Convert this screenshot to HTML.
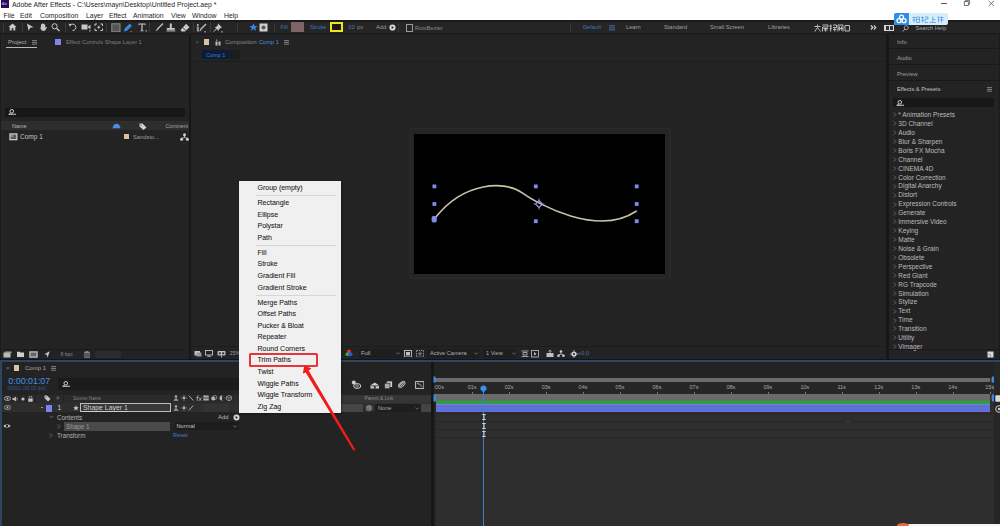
<!DOCTYPE html><html><head><meta charset="utf-8"><style>
html,body{margin:0;padding:0;width:1000px;height:526px;overflow:hidden;background:#171717}
body>div,body>svg{position:absolute}
.t{position:absolute;white-space:nowrap;font-family:"Liberation Sans",sans-serif}
</style></head><body>
<div style="left:0px;top:0px;width:1000px;height:526px;background:#171717;"></div>
<div style="left:0px;top:0px;width:1000px;height:20px;background:#ffffff;"></div>
<div style="left:0.5px;top:0px;width:8.5px;height:7.5px;background:#2b0c52;"></div>
<div class="t" style="left:1.7px;top:1.21px;font-size:4.3px;line-height:5.16px;color:#a98cff;font-weight:bold">Ae</div>
<div class="t" style="left:12px;top:0.70px;font-size:6.9px;line-height:8.28px;color:#262626;">Adobe After Effects - C:\Users\mayn\Desktop\Untitled Project.aep *</div>
<div class="t" style="left:3.5px;top:11.70px;font-size:6.9px;line-height:8.28px;color:#262626;">File</div>
<div class="t" style="left:20px;top:11.70px;font-size:6.9px;line-height:8.28px;color:#262626;">Edit</div>
<div class="t" style="left:40px;top:11.70px;font-size:6.9px;line-height:8.28px;color:#262626;">Composition</div>
<div class="t" style="left:86px;top:11.70px;font-size:6.9px;line-height:8.28px;color:#262626;">Layer</div>
<div class="t" style="left:109px;top:11.70px;font-size:6.9px;line-height:8.28px;color:#262626;">Effect</div>
<div class="t" style="left:133px;top:11.70px;font-size:6.9px;line-height:8.28px;color:#262626;">Animation</div>
<div class="t" style="left:171px;top:11.70px;font-size:6.9px;line-height:8.28px;color:#262626;">View</div>
<div class="t" style="left:192px;top:11.70px;font-size:6.9px;line-height:8.28px;color:#262626;">Window</div>
<div class="t" style="left:224px;top:11.70px;font-size:6.9px;line-height:8.28px;color:#262626;">Help</div>
<div style="left:941px;top:3.2px;width:6px;height:0.7px;background:#555;"></div>
<svg style="position:absolute;left:963px;top:0px;" width="8" height="7" viewBox="0 0 8 7"><rect x="1.3" y="1.6" width="4" height="3.8" fill="none" stroke="#555" stroke-width="0.8"/><path d="M2.6 1.6V0.4H6.6V4.2H5.3" fill="none" stroke="#555" stroke-width="0.8"/></svg>
<svg style="position:absolute;left:987px;top:0px;" width="10" height="8" viewBox="0 0 10 8"><path d="M1.6 0.8L7 6.2M7 0.8L1.6 6.2" stroke="#555" stroke-width="0.8"/></svg>
<div style="left:0px;top:20px;width:1000px;height:13px;background:#252525;"></div>
<div style="left:0px;top:20px;width:1000px;height:1.8px;background:#1b1b1b;"></div>
<div style="left:0px;top:32.8px;width:1000px;height:2.2px;background:#1c1c1c;"></div>
<div style="left:3.4px;top:22.5px;width:0.6px;height:9px;background:#3a3a3a;"></div>
<div style="left:21.8px;top:22.5px;width:0.6px;height:9px;background:#3a3a3a;"></div>
<div style="left:64.5px;top:22.5px;width:0.6px;height:9px;background:#3a3a3a;"></div>
<div style="left:106.4px;top:22.5px;width:0.6px;height:9px;background:#3a3a3a;"></div>
<div style="left:149px;top:22.5px;width:0.6px;height:9px;background:#3a3a3a;"></div>
<div style="left:192.5px;top:22.5px;width:0.6px;height:9px;background:#3a3a3a;"></div>
<div style="left:209.5px;top:22.5px;width:0.6px;height:9px;background:#3a3a3a;"></div>
<div style="left:237px;top:22.5px;width:0.6px;height:9px;background:#3a3a3a;"></div>
<div style="left:274px;top:22.5px;width:0.6px;height:9px;background:#3a3a3a;"></div>
<div style="left:398px;top:22.5px;width:0.6px;height:9px;background:#3a3a3a;"></div>
<div style="left:570px;top:22.5px;width:0.6px;height:9px;background:#3a3a3a;"></div>
<svg style="position:absolute;left:8px;top:23px;" width="9" height="8" viewBox="0 0 9 8"><path d="M0.5 4L4.5 0.5L8.5 4H7.3V7.5H5.3V5.2H3.7V7.5H1.7V4Z" fill="#c8c8c8"/></svg>
<svg style="position:absolute;left:26px;top:23px;" width="8" height="8" viewBox="0 0 8 8"><path d="M1 0.5L7.5 4.3L4.3 4.8L2.5 7.8Z" fill="#c8c8c8"/></svg>
<svg style="position:absolute;left:38.5px;top:23px;" width="9" height="8" viewBox="0 0 9 8"><path d="M2 3.5V1.2h1V3.2V0.6h1.1v2.6V0.8h1.1v2.6V1.5h1v3.2l1-1 .8.5L6 7.8H3L1.3 5.2Z" fill="#c8c8c8"/></svg>
<svg style="position:absolute;left:51px;top:23px;" width="9" height="8.5" viewBox="0 0 9 8.5"><circle cx="3.6" cy="3.3" r="2.6" fill="none" stroke="#c8c8c8" stroke-width="1"/><path d="M5.5 5.3L8.5 8" stroke="#c8c8c8" stroke-width="1.3"/></svg>
<svg style="position:absolute;left:68px;top:23px;" width="9" height="8" viewBox="0 0 9 8"><path d="M2 2.5A3.2 3.2 0 1 1 4.5 7.5" fill="none" stroke="#c8c8c8" stroke-width="1"/><path d="M0.5 0.8L3.5 1L2 3.8Z" fill="#c8c8c8"/></svg>
<svg style="position:absolute;left:80.5px;top:23px;" width="10" height="8.5" viewBox="0 0 10 8.5"><rect x="0.5" y="1.5" width="6" height="5" fill="#c8c8c8"/><path d="M6.5 4L9.5 1.8V6.2Z" fill="#c8c8c8"/><rect x="8" y="7.3" width="1.5" height="1" fill="#c8c8c8"/></svg>
<svg style="position:absolute;left:94px;top:23px;" width="9.5" height="8.5" viewBox="0 0 9.5 8.5"><path d="M1 1h2M1 1v2M8.5 1h-2M8.5 1v2M1 7.5h2M1 7.5v-2M8.5 7.5h-2M8.5 7.5v-2" stroke="#c8c8c8" stroke-width="1"/><path d="M4.75 2.8V5.7M3.3 4.25H6.2" stroke="#c8c8c8" stroke-width="1"/></svg>
<svg style="position:absolute;left:110.5px;top:22.5px;" width="10" height="9.5" viewBox="0 0 10 9.5"><rect x="0.8" y="0.8" width="8.2" height="8" fill="#555" stroke="#8a8a8a" stroke-width="1"/></svg>
<svg style="position:absolute;left:123px;top:22.5px;" width="10" height="9.5" viewBox="0 0 10 9.5"><path d="M1 7.5L2 5L6.8 0.8L9 2.8L4.5 7.3L1.8 8.5Z" fill="#3d86e6"/><rect x="7.5" y="8" width="1.5" height="1.2" fill="#c06020"/></svg>
<svg style="position:absolute;left:137.5px;top:23px;" width="9" height="9" viewBox="0 0 9 9"><path d="M0.5 0.5H7.5V2.3H6.8V1.4H4.6V7.5H5.5V8.2H2.5V7.5H3.4V1.4H1.2V2.3H0.5Z" fill="#c8c8c8"/><rect x="7.5" y="7.3" width="1.2" height="1.2" fill="#c8c8c8"/></svg>
<svg style="position:absolute;left:153.5px;top:23px;" width="10" height="9" viewBox="0 0 10 9"><path d="M9 0.5L3.5 6" stroke="#c8c8c8" stroke-width="1.2"/><path d="M3.5 5.5L1 8.3L2.6 7.6L4.5 6.6Z" fill="#c8c8c8"/></svg>
<svg style="position:absolute;left:166px;top:23px;" width="10" height="9" viewBox="0 0 10 9"><rect x="3.8" y="0.5" width="2" height="4.5" fill="#c8c8c8"/><rect x="0.8" y="5" width="8" height="1.8" fill="#c8c8c8"/><rect x="0.5" y="7.4" width="8.8" height="1" fill="#c8c8c8"/></svg>
<svg style="position:absolute;left:179.5px;top:23px;" width="10" height="9" viewBox="0 0 10 9"><path d="M6 0.8L9.5 4.2L5 8.5L1.5 8.5L0.5 7L5.5 1.5Z" fill="#c8c8c8"/><path d="M2.5 4.3L5.8 7.6" stroke="#262626" stroke-width="0.8"/></svg>
<svg style="position:absolute;left:196px;top:22.5px;" width="11" height="10" viewBox="0 0 11 10"><circle cx="1.8" cy="2" r="0.9" fill="#c8c8c8"/><path d="M1.3 3.5V8.5M2.3 3.5V8.5" stroke="#c8c8c8" stroke-width="0.8"/><path d="M10 1L4.5 6.5" stroke="#c8c8c8" stroke-width="1.2"/><path d="M4.5 6L3 8.5L5.5 7.2Z" fill="#c8c8c8"/><rect x="8.5" y="8.2" width="1.3" height="1.2" fill="#c8c8c8"/></svg>
<svg style="position:absolute;left:212.5px;top:22.5px;" width="10" height="10" viewBox="0 0 10 10"><path d="M5 0.5L9 4.5L7.5 5L5.5 7L5.8 8.3L1.5 4L2.8 4.3L4.8 2.3Z" fill="#c8c8c8"/><path d="M3.2 6L0.8 8.6" stroke="#c8c8c8" stroke-width="1"/><rect x="8.3" y="8.3" width="1.3" height="1.2" fill="#c8c8c8"/></svg>
<svg style="position:absolute;left:249px;top:23px;" width="9" height="8.5" viewBox="0 0 9 8.5"><path d="M4.5 0.3L5.6 3H8.6L6.2 4.9L7.2 8L4.5 6.1L1.8 8L2.8 4.9L0.4 3H3.4Z" fill="#3d86e6"/></svg>
<svg style="position:absolute;left:259px;top:23px;" width="9" height="9" viewBox="0 0 9 9"><rect x="0.5" y="0.5" width="8" height="8" fill="#cfcfcf"/><circle cx="4.5" cy="4.5" r="2" fill="#555"/></svg>
<div class="t" style="left:280.5px;top:24.49px;font-size:5.7px;line-height:6.84px;color:#3f78c0;">Fill</div>
<div style="left:291px;top:22.2px;width:13px;height:9.6px;background:#7d6467;"></div>
<div class="t" style="left:310px;top:24.49px;font-size:5.7px;line-height:6.84px;color:#3f78c0;">Stroke</div>
<div style="left:329.8px;top:22.3px;width:13px;height:9.7px;background:#1a1a1a;border:2.3px solid #f0e41a;box-sizing:border-box"></div>
<div class="t" style="left:348.3px;top:24.38px;font-size:5.9px;line-height:7.08px;color:#3f78c0;">10</div>
<div class="t" style="left:357px;top:24.38px;font-size:5.9px;line-height:7.08px;color:#888;">px</div>
<div class="t" style="left:376px;top:24.49px;font-size:5.7px;line-height:6.84px;color:#9a9a9a;">Add:</div>
<svg style="position:absolute;left:389px;top:24px;" width="7" height="7" viewBox="0 0 7 7"><circle cx="3.5" cy="3.5" r="3.1" fill="#d8d8d8"/><path d="M2.6 1.9L5 3.5L2.6 5.1Z" fill="#262626"/></svg>
<div style="left:405.5px;top:24px;width:7.5px;height:7.5px;background:transparent;border:1px solid #9a9a9a;box-sizing:border-box"></div>
<div class="t" style="left:415px;top:24.55px;font-size:5.6px;line-height:6.72px;color:#8a8a8a;">RotoBezier</div>
<div class="t" style="left:583px;top:24.49px;font-size:5.7px;line-height:6.84px;color:#3f78c0;">Default</div>
<svg style="position:absolute;left:608.5px;top:24.5px;" width="6" height="6" viewBox="0 0 6 6"><path d="M0 0.8H6M0 2.8H6M0 4.8H6" stroke="#3f78c0" stroke-width="0.9"/></svg>
<div class="t" style="left:626px;top:24.49px;font-size:5.7px;line-height:6.84px;color:#a0a0a0;">Learn</div>
<div class="t" style="left:664px;top:24.49px;font-size:5.7px;line-height:6.84px;color:#a0a0a0;">Standard</div>
<div class="t" style="left:710px;top:24.49px;font-size:5.7px;line-height:6.84px;color:#a0a0a0;">Small Screen</div>
<div class="t" style="left:768px;top:24.49px;font-size:5.7px;line-height:6.84px;color:#a0a0a0;">Libraries</div>
<svg style="position:absolute;left:814px;top:23.5px;" width="36" height="8" viewBox="0 0 36 8"><g stroke="#bcbcbc" stroke-width="1" fill="none"><path d="M0.5 2.5H6.5M3.5 0.5V3.5L0.8 7.5M3.5 3.5L6.5 7.5"/><path d="M8.5 1H14V3H8.5V7.5M9.5 4.5H14M10 6H13.5M11.5 4V7.5"/><path d="M15.5 2H18M16.7 0.5V7.5M15.5 5L18 4M19 1H22.5V3.5H19M20.8 3.5V7.5M19 5.5H22.5"/><path d="M24 1V7.5M24 1H29V7.5M25.5 2.5V6.5M27.5 2.5V6.5M24 4.5H29"/><path d="M31 1.5H35.5V7H31Z"/></g></svg>
<svg style="position:absolute;left:869.5px;top:24.8px;" width="7" height="5" viewBox="0 0 7 5"><path d="M0.8 0.5L2.8 2.5L0.8 4.5M3.8 0.5L5.8 2.5L3.8 4.5" stroke="#dcdcdc" stroke-width="1.1" fill="none"/></svg>
<div style="left:884px;top:25px;width:10px;height:6px;background:#d8d8d8;"></div>
<div style="left:885.5px;top:26.2px;width:3px;height:3.5px;background:#333;"></div>
<div style="left:889.5px;top:26.2px;width:3px;height:3.5px;background:#333;"></div>
<svg style="position:absolute;left:901.5px;top:24.5px;" width="7" height="7" viewBox="0 0 7 7"><circle cx="4.3" cy="2.7" r="2" fill="none" stroke="#bbb" stroke-width="0.8"/><path d="M3 4L0.7 6.5" stroke="#bbb" stroke-width="0.9"/></svg>
<div class="t" style="left:915.5px;top:24.55px;font-size:5.6px;line-height:6.72px;color:#a4a4a4;">Search Help</div>
<div style="left:894px;top:12.5px;width:54px;height:12.5px;background:#d6eefc;border-radius:2px"></div>
<div style="left:894px;top:12.5px;width:14.5px;height:12.5px;background:#2f8de4;border-radius:2px 0 0 2px"></div>
<svg style="position:absolute;left:896px;top:13.5px;" width="11" height="10" viewBox="0 0 11 10"><g fill="none" stroke="#fff" stroke-width="1.3"><circle cx="5.5" cy="3.2" r="2"/><circle cx="3" cy="6.7" r="2"/><circle cx="8" cy="6.7" r="2"/></g></svg>
<svg style="position:absolute;left:912px;top:15.5px;" width="32" height="7" viewBox="0 0 32 7"><g stroke="#5b9be0" stroke-width="0.8" fill="none"><path d="M0.5 1.5H3.5M2 0.5V6.5M0.5 4H3.5M4.5 1H7.5V6.5H4.5ZM4.5 3.5H7.5"/><path d="M9 1.5H12M10.5 0.5V6.5M9 5L12 4M13 1H16V3H13V6.5H16"/><path d="M17.5 6.5H24M20.8 0.5V6.5M20.8 3.5H23.5"/><path d="M25.5 1.5L26.5 0.5V6.5M27.5 1.5H31.5M29.5 0.5V6.5M27.5 4H31.5"/></g></svg>
<div style="left:0px;top:35px;width:189px;height:323.5px;background:#232323;"></div>
<div style="left:0px;top:35px;width:1.4px;height:323.5px;background:#1c1c1c;"></div>
<div style="left:1.4px;top:35px;width:3px;height:323.5px;background:#252525;"></div>
<div class="t" style="left:8px;top:38.78px;font-size:5.9px;line-height:7.08px;color:#b0b0b0;">Project</div>
<svg style="position:absolute;left:31.5px;top:39.8px;" width="5" height="5" viewBox="0 0 5 5"><path d="M0 0.6H5M0 2.4H5M0 4.2H5" stroke="#9a9a9a" stroke-width="0.8"/></svg>
<div style="left:6px;top:46.5px;width:31px;height:1px;background:#b8b8b8;"></div>
<div style="left:55px;top:39px;width:5.5px;height:6px;background:#8084f2;"></div>
<div class="t" style="left:66px;top:38.89px;font-size:5.7px;line-height:6.84px;color:#7e7e7e;">Effect Controls Shape Layer 1</div>
<div style="left:5px;top:107.5px;width:180px;height:9.5px;background:#171717;"></div>
<svg style="position:absolute;left:8px;top:109px;" width="9" height="7" viewBox="0 0 9 7"><circle cx="3.8" cy="2.3" r="1.8" fill="none" stroke="#d4d4d4" stroke-width="1"/><path d="M0.6 5.3H6.2M2.6 3.8L1.2 5.3" stroke="#d4d4d4" stroke-width="1"/><path d="M5.8 4.8H8.4L7.1 6.3Z" fill="#d4d4d4"/></svg>
<div style="left:1.4px;top:121.4px;width:187.6px;height:8.6px;background:#2e2e2e;"></div>
<div class="t" style="left:12px;top:122.67px;font-size:5.4px;line-height:6.48px;color:#b4b4b4;">Name</div>
<svg style="position:absolute;left:111.5px;top:123px;" width="9" height="6" viewBox="0 0 9 6"><path d="M0.5 5.2Q1.5 0.8 4.5 0.8Q7.5 0.8 8.5 5.2Z" fill="#4a8fe0"/></svg>
<svg style="position:absolute;left:139px;top:122.5px;" width="8" height="7" viewBox="0 0 8 7"><path d="M0.5 0.5H3.5L7.5 4.5L4.5 7L0.5 3.5Z" fill="#d0d0d0"/><circle cx="2" cy="2" r="0.6" fill="#2e2e2e"/></svg>
<div class="t" style="left:165.5px;top:122.78px;font-size:5.2px;line-height:6.24px;color:#a8a8a8;">Comment</div>
<svg style="position:absolute;left:9px;top:133px;" width="9" height="7.5" viewBox="0 0 9 7.5"><rect x="0.3" y="0.3" width="8.2" height="7" fill="#c8c8c8"/><rect x="1.6" y="1.6" width="5.6" height="4.4" fill="#5a5a5a"/><rect x="2.2" y="2.2" width="2" height="1.5" fill="#aaa"/></svg>
<div class="t" style="left:20px;top:133.23px;font-size:6.5px;line-height:7.80px;color:#c4c4c4;">Comp 1</div>
<div style="left:124px;top:134px;width:4.5px;height:5px;background:#d8c29c;"></div>
<div class="t" style="left:133px;top:134.04px;font-size:5.8px;line-height:6.96px;color:#9c9c9c;">Sandsto...</div>
<svg style="position:absolute;left:180px;top:133px;" width="9" height="8" viewBox="0 0 9 8"><circle cx="4.5" cy="1.7" r="1.5" fill="#d0d0d0"/><circle cx="1.6" cy="6.3" r="1.5" fill="#d0d0d0"/><circle cx="7.4" cy="6.3" r="1.5" fill="#d0d0d0"/><path d="M4.5 2.5V4.5M1.6 5.5L4.5 4.2L7.4 5.5" stroke="#d0d0d0" stroke-width="0.8" fill="none"/></svg>
<div style="left:0px;top:348.8px;width:189px;height:0.8px;background:#1c1c1c;"></div>
<svg style="position:absolute;left:3px;top:351px;" width="9" height="7" viewBox="0 0 9 7"><rect x="0.5" y="1.5" width="7" height="5" fill="#bcbcbc"/><rect x="2" y="0.5" width="6.5" height="1.8" fill="#9a9a9a"/></svg>
<svg style="position:absolute;left:17px;top:351px;" width="7" height="6" viewBox="0 0 7 6"><path d="M0 0.8H2.8L3.5 1.6H7V6H0Z" fill="#d0d0d0"/></svg>
<svg style="position:absolute;left:29px;top:350.5px;" width="9" height="7" viewBox="0 0 9 7"><rect x="0.3" y="0.3" width="8.4" height="6.4" fill="#c8c8c8"/><rect x="1.5" y="1.5" width="6" height="4" fill="#666"/></svg>
<svg style="position:absolute;left:44px;top:350.5px;" width="6" height="7" viewBox="0 0 6 7"><path d="M5.8 0.3L0.3 3.3L2.8 3.8L3.5 6.7Z" fill="#c8c8c8"/></svg>
<div class="t" style="left:60.5px;top:351.30px;font-size:5px;line-height:6.00px;color:#8a8a8a;">8 bpc</div>
<svg style="position:absolute;left:84px;top:350.5px;" width="6" height="7" viewBox="0 0 6 7"><path d="M0.2 1.3H5.8M2 1.3V0.3H4V1.3M0.8 1.8H5.2V6.7H0.8Z" stroke="#aaa" stroke-width="0.7" fill="none"/><path d="M2.2 2.5V6M3.8 2.5V6" stroke="#aaa" stroke-width="0.6"/></svg>
<div style="left:95px;top:350.5px;width:26px;height:7px;background:#2c2c2c;border-radius:2px"></div>
<div style="left:191px;top:35px;width:695px;height:323.5px;background:#232323;"></div>
<div class="t" style="left:195.5px;top:39.31px;font-size:5.5px;line-height:6.60px;color:#666;">×</div>
<div style="left:204px;top:39px;width:5px;height:5.5px;background:#d8c4a4;"></div>
<svg style="position:absolute;left:214.5px;top:38.5px;" width="6" height="7" viewBox="0 0 6 7"><rect x="0.5" y="2.5" width="2" height="4" fill="#bdbdbd"/><rect x="3.5" y="2.5" width="2" height="4" fill="#bdbdbd"/><rect x="1.3" y="0.5" width="0.9" height="1.5" fill="#bdbdbd"/></svg>
<div class="t" style="left:225px;top:39.19px;font-size:5.7px;line-height:6.84px;color:#8a8a8a;">Composition</div>
<div class="t" style="left:259px;top:39.19px;font-size:5.7px;line-height:6.84px;color:#4a8fe0;">Comp 1</div>
<svg style="position:absolute;left:284px;top:40px;" width="5" height="5" viewBox="0 0 5 5"><path d="M0 0.6H5M0 2.4H5M0 4.2H5" stroke="#999" stroke-width="0.8"/></svg>
<div style="left:202.2px;top:50px;width:37.5px;height:8.7px;background:linear-gradient(90deg,#0c1c36 0%,#0c1c36 60%,#221e16 100%)"></div>
<div class="t" style="left:206.3px;top:51.87px;font-size:5.4px;line-height:6.48px;color:#4a80c8;">Comp 1</div>
<div style="left:191px;top:60.5px;width:695px;height:1.2px;background:#1d1d1d;"></div>
<div style="left:408.5px;top:128.3px;width:262.5px;height:150.7px;background:#282828;"></div>
<div style="left:410.5px;top:130.3px;width:258.5px;height:146.7px;background:#252525;"></div>
<div style="left:413.8px;top:133.7px;width:251px;height:140.5px;background:#000;"></div>
<svg style="position:absolute;left:413px;top:133px;" width="253" height="143" viewBox="0 0 253 143"><path d="M22.5 84.5C51 48.4 92.1 47.4 109.3 59.8C125.8 71.8 185.7 104 223.5 78" fill="none" stroke="#c9c4a4" stroke-width="1.6"/><rect x="19.5" y="51.5" width="3.8" height="3.8" fill="#7f8aee"/><rect x="19.5" y="69.1" width="3.8" height="3.8" fill="#7f8aee"/><rect x="120.89999999999999" y="51.5" width="3.8" height="3.8" fill="#7f8aee"/><rect x="120.89999999999999" y="86.3" width="3.8" height="3.8" fill="#7f8aee"/><rect x="221.79999999999998" y="51.5" width="3.8" height="3.8" fill="#7f8aee"/><rect x="221.79999999999998" y="69.1" width="3.8" height="3.8" fill="#7f8aee"/><rect x="221.79999999999998" y="86.3" width="3.8" height="3.8" fill="#7f8aee"/><rect x="18.6" y="83" width="5.2" height="6.5" rx="1.8" fill="#7f8aee"/><path d="M126 67.5L129.5 71L126 74.5L122.5 71Z" fill="none" stroke="#9aa0e8" stroke-width="1.1"/><path d="M126 65.5V67.5M126 74.5V76.5M120.5 71H122.5M129.5 71H131.5" stroke="#9aa0e8" stroke-width="0.8"/><circle cx="113.5" cy="62.5" r="0.9" fill="#7d88ec"/><circle cx="223.3" cy="78.5" r="1" fill="#7d88ec"/></svg>
<div style="left:191px;top:346px;width:695px;height:0.8px;background:#1c1c1c;"></div>
<svg style="position:absolute;left:193.5px;top:350px;" width="8" height="7" viewBox="0 0 8 7"><rect x="0.5" y="1" width="5.5" height="4.5" fill="#c4c4c4"/><rect x="2.5" y="2.5" width="5" height="4" fill="#9a9a9a"/></svg>
<svg style="position:absolute;left:205px;top:350px;" width="8" height="7" viewBox="0 0 8 7"><rect x="0.5" y="0.5" width="7" height="4.5" fill="none" stroke="#c4c4c4" stroke-width="0.9"/><path d="M4 5V6.8M2 6.8H6" stroke="#c4c4c4" stroke-width="0.8"/></svg>
<svg style="position:absolute;left:216.5px;top:349.5px;" width="9" height="8" viewBox="0 0 9 8"><rect x="0.5" y="1" width="8" height="4.5" rx="1" fill="#c4c4c4"/><rect x="1.8" y="2.3" width="2" height="2" fill="#333"/><rect x="5.2" y="2.3" width="2" height="2" fill="#333"/><path d="M4.5 5.5V7.5" stroke="#c4c4c4" stroke-width="0.8"/></svg>
<div class="t" style="left:229.5px;top:350.11px;font-size:5.5px;line-height:6.60px;color:#9a9a9a;">25%</div>
<svg style="position:absolute;left:344.5px;top:349px;" width="8" height="8" viewBox="0 0 8 8"><circle cx="4" cy="2.5" r="2" fill="#e03030"/><circle cx="2.5" cy="5.3" r="2" fill="#30b040"/><circle cx="5.5" cy="5.3" r="2" fill="#3050e0"/></svg>
<div style="left:359px;top:348.5px;width:44px;height:9px;background:#1e1e1e;"></div>
<div class="t" style="left:361px;top:349.84px;font-size:5.8px;line-height:6.96px;color:#b8b8b8;">Full</div>
<svg style="position:absolute;left:395.5px;top:352px;" width="4" height="3" viewBox="0 0 4 3"><path d="M0.3 0.5L2 2.3L3.7 0.5" stroke="#888" stroke-width="0.7" fill="none"/></svg>
<svg style="position:absolute;left:404px;top:349.5px;" width="8" height="7.5" viewBox="0 0 8 7.5"><rect x="0.5" y="0.5" width="7" height="6.5" fill="none" stroke="#c0c0c0" stroke-width="0.9"/><rect x="2" y="2" width="4" height="3.5" fill="#c0c0c0"/></svg>
<svg style="position:absolute;left:416px;top:349.5px;" width="8" height="7.5" viewBox="0 0 8 7.5"><rect x="0.5" y="0.5" width="7" height="6.5" fill="none" stroke="#a8a8a8" stroke-width="0.8" stroke-dasharray="1.5 0.8"/><path d="M2 3.8H6M4 1.8V5.8" stroke="#a8a8a8" stroke-width="0.7"/></svg>
<div style="left:427px;top:348.5px;width:52px;height:9px;background:#1e1e1e;"></div>
<div class="t" style="left:430px;top:349.95px;font-size:5.6px;line-height:6.72px;color:#b0b0b0;">Active Camera</div>
<svg style="position:absolute;left:473.5px;top:352px;" width="4" height="3" viewBox="0 0 4 3"><path d="M0.3 0.5L2 2.3L3.7 0.5" stroke="#888" stroke-width="0.7" fill="none"/></svg>
<div style="left:483px;top:348.5px;width:33px;height:9px;background:#1e1e1e;"></div>
<div class="t" style="left:486px;top:349.95px;font-size:5.6px;line-height:6.72px;color:#b0b0b0;">1 View</div>
<svg style="position:absolute;left:511.5px;top:352px;" width="4" height="3" viewBox="0 0 4 3"><path d="M0.3 0.5L2 2.3L3.7 0.5" stroke="#888" stroke-width="0.7" fill="none"/></svg>
<svg style="position:absolute;left:521px;top:349.5px;" width="8" height="8" viewBox="0 0 8 8"><path d="M0.5 1H7.5M0.5 6.5H7.5M2 2.5H6V5H2Z" stroke="#c0c0c0" stroke-width="0.8" fill="none"/></svg>
<svg style="position:absolute;left:531px;top:349.5px;" width="8" height="8" viewBox="0 0 8 8"><rect x="0.5" y="0.5" width="7" height="6.5" fill="none" stroke="#c0c0c0" stroke-width="0.8"/><path d="M3 2L5.5 4L3 5.5Z" fill="#c0c0c0"/></svg>
<svg style="position:absolute;left:546px;top:349.5px;" width="8" height="8" viewBox="0 0 8 8"><rect x="0.5" y="3" width="7" height="4" fill="#c0c0c0"/><path d="M4 0.3V3M2.5 1.5L4 0.3L5.5 1.5" stroke="#c0c0c0" stroke-width="0.8" fill="none"/></svg>
<svg style="position:absolute;left:557px;top:349.5px;" width="8" height="8" viewBox="0 0 8 8"><circle cx="4" cy="1.5" r="1.3" fill="#d0d0d0"/><circle cx="1.5" cy="5.8" r="1.3" fill="#d0d0d0"/><circle cx="6.5" cy="5.8" r="1.3" fill="#d0d0d0"/><path d="M4 2.5V4.2M1.5 4.8L4 4L6.5 4.8" stroke="#d0d0d0" stroke-width="0.7" fill="none"/></svg>
<svg style="position:absolute;left:569.5px;top:349.5px;" width="8" height="8" viewBox="0 0 8 8"><circle cx="4" cy="4" r="2.6" fill="#d0d0d0"/><circle cx="4" cy="4" r="1" fill="#232323"/><path d="M4 0.3V1.5M4 6.5V7.7M0.3 4H1.5M6.5 4H7.7" stroke="#d0d0d0" stroke-width="1"/></svg>
<div class="t" style="left:578px;top:350.05px;font-size:5.6px;line-height:6.72px;color:#3f78c0;">+0.0</div>
<div style="left:889px;top:35px;width:111px;height:323.5px;background:#232323;"></div>
<div style="left:998.5px;top:33.5px;width:1.5px;height:325px;background:#1b1b1b;"></div>
<div class="t" style="left:897px;top:38.64px;font-size:5.8px;line-height:6.96px;color:#a0a0a0;">Info</div>
<div style="left:889px;top:48px;width:110px;height:0.8px;background:#181818;"></div>
<div class="t" style="left:897px;top:54.64px;font-size:5.8px;line-height:6.96px;color:#a0a0a0;">Audio</div>
<div style="left:889px;top:64px;width:110px;height:0.8px;background:#181818;"></div>
<div class="t" style="left:897px;top:70.64px;font-size:5.8px;line-height:6.96px;color:#a0a0a0;">Preview</div>
<div style="left:889px;top:80.3px;width:110px;height:0.8px;background:#181818;"></div>
<div class="t" style="left:897px;top:85.99px;font-size:5.7px;line-height:6.84px;color:#c4c4c4;">Effects &amp; Presets</div>
<svg style="position:absolute;left:987px;top:87px;" width="5" height="5" viewBox="0 0 5 5"><path d="M0 0.6H5M0 2.4H5M0 4.2H5" stroke="#999" stroke-width="0.8"/></svg>
<div style="left:893px;top:98px;width:101px;height:9px;background:#171717;border-radius:1px"></div>
<svg style="position:absolute;left:896px;top:99.5px;" width="9" height="7" viewBox="0 0 9 7"><circle cx="3.8" cy="2.3" r="1.8" fill="none" stroke="#d4d4d4" stroke-width="1"/><path d="M0.6 5.3H6.2M2.6 3.8L1.2 5.3" stroke="#d4d4d4" stroke-width="1"/><path d="M5.8 4.8H8.4L7.1 6.3Z" fill="#d4d4d4"/></svg>
<svg style="position:absolute;left:892.5px;top:112.4px;" width="4" height="5" viewBox="0 0 4 5"><path d="M0.8 0.5L2.8 2.5L0.8 4.5" stroke="#888" stroke-width="0.7" fill="none"/></svg>
<div class="t" style="left:898.3px;top:111.13px;font-size:6.5px;line-height:7.80px;color:#bdbdbd;">* Animation Presets</div>
<svg style="position:absolute;left:892.5px;top:121.32000000000001px;" width="4" height="5" viewBox="0 0 4 5"><path d="M0.8 0.5L2.8 2.5L0.8 4.5" stroke="#888" stroke-width="0.7" fill="none"/></svg>
<div class="t" style="left:898.3px;top:120.05px;font-size:6.5px;line-height:7.80px;color:#bdbdbd;">3D Channel</div>
<svg style="position:absolute;left:892.5px;top:130.24px;" width="4" height="5" viewBox="0 0 4 5"><path d="M0.8 0.5L2.8 2.5L0.8 4.5" stroke="#888" stroke-width="0.7" fill="none"/></svg>
<div class="t" style="left:898.3px;top:128.97px;font-size:6.5px;line-height:7.80px;color:#bdbdbd;">Audio</div>
<svg style="position:absolute;left:892.5px;top:139.16px;" width="4" height="5" viewBox="0 0 4 5"><path d="M0.8 0.5L2.8 2.5L0.8 4.5" stroke="#888" stroke-width="0.7" fill="none"/></svg>
<div class="t" style="left:898.3px;top:137.89px;font-size:6.5px;line-height:7.80px;color:#bdbdbd;">Blur &amp; Sharpen</div>
<svg style="position:absolute;left:892.5px;top:148.08px;" width="4" height="5" viewBox="0 0 4 5"><path d="M0.8 0.5L2.8 2.5L0.8 4.5" stroke="#888" stroke-width="0.7" fill="none"/></svg>
<div class="t" style="left:898.3px;top:146.81px;font-size:6.5px;line-height:7.80px;color:#bdbdbd;">Boris FX Mocha</div>
<svg style="position:absolute;left:892.5px;top:157.0px;" width="4" height="5" viewBox="0 0 4 5"><path d="M0.8 0.5L2.8 2.5L0.8 4.5" stroke="#888" stroke-width="0.7" fill="none"/></svg>
<div class="t" style="left:898.3px;top:155.73px;font-size:6.5px;line-height:7.80px;color:#bdbdbd;">Channel</div>
<svg style="position:absolute;left:892.5px;top:165.92000000000002px;" width="4" height="5" viewBox="0 0 4 5"><path d="M0.8 0.5L2.8 2.5L0.8 4.5" stroke="#888" stroke-width="0.7" fill="none"/></svg>
<div class="t" style="left:898.3px;top:164.65px;font-size:6.5px;line-height:7.80px;color:#bdbdbd;">CINEMA 4D</div>
<svg style="position:absolute;left:892.5px;top:174.84px;" width="4" height="5" viewBox="0 0 4 5"><path d="M0.8 0.5L2.8 2.5L0.8 4.5" stroke="#888" stroke-width="0.7" fill="none"/></svg>
<div class="t" style="left:898.3px;top:173.57px;font-size:6.5px;line-height:7.80px;color:#bdbdbd;">Color Correction</div>
<svg style="position:absolute;left:892.5px;top:183.76px;" width="4" height="5" viewBox="0 0 4 5"><path d="M0.8 0.5L2.8 2.5L0.8 4.5" stroke="#888" stroke-width="0.7" fill="none"/></svg>
<div class="t" style="left:898.3px;top:182.49px;font-size:6.5px;line-height:7.80px;color:#bdbdbd;">Digital Anarchy</div>
<svg style="position:absolute;left:892.5px;top:192.68px;" width="4" height="5" viewBox="0 0 4 5"><path d="M0.8 0.5L2.8 2.5L0.8 4.5" stroke="#888" stroke-width="0.7" fill="none"/></svg>
<div class="t" style="left:898.3px;top:191.41px;font-size:6.5px;line-height:7.80px;color:#bdbdbd;">Distort</div>
<svg style="position:absolute;left:892.5px;top:201.60000000000002px;" width="4" height="5" viewBox="0 0 4 5"><path d="M0.8 0.5L2.8 2.5L0.8 4.5" stroke="#888" stroke-width="0.7" fill="none"/></svg>
<div class="t" style="left:898.3px;top:200.33px;font-size:6.5px;line-height:7.80px;color:#bdbdbd;">Expression Controls</div>
<svg style="position:absolute;left:892.5px;top:210.52px;" width="4" height="5" viewBox="0 0 4 5"><path d="M0.8 0.5L2.8 2.5L0.8 4.5" stroke="#888" stroke-width="0.7" fill="none"/></svg>
<div class="t" style="left:898.3px;top:209.25px;font-size:6.5px;line-height:7.80px;color:#bdbdbd;">Generate</div>
<svg style="position:absolute;left:892.5px;top:219.44px;" width="4" height="5" viewBox="0 0 4 5"><path d="M0.8 0.5L2.8 2.5L0.8 4.5" stroke="#888" stroke-width="0.7" fill="none"/></svg>
<div class="t" style="left:898.3px;top:218.17px;font-size:6.5px;line-height:7.80px;color:#bdbdbd;">Immersive Video</div>
<svg style="position:absolute;left:892.5px;top:228.36px;" width="4" height="5" viewBox="0 0 4 5"><path d="M0.8 0.5L2.8 2.5L0.8 4.5" stroke="#888" stroke-width="0.7" fill="none"/></svg>
<div class="t" style="left:898.3px;top:227.09px;font-size:6.5px;line-height:7.80px;color:#bdbdbd;">Keying</div>
<svg style="position:absolute;left:892.5px;top:237.28px;" width="4" height="5" viewBox="0 0 4 5"><path d="M0.8 0.5L2.8 2.5L0.8 4.5" stroke="#888" stroke-width="0.7" fill="none"/></svg>
<div class="t" style="left:898.3px;top:236.01px;font-size:6.5px;line-height:7.80px;color:#bdbdbd;">Matte</div>
<svg style="position:absolute;left:892.5px;top:246.20000000000002px;" width="4" height="5" viewBox="0 0 4 5"><path d="M0.8 0.5L2.8 2.5L0.8 4.5" stroke="#888" stroke-width="0.7" fill="none"/></svg>
<div class="t" style="left:898.3px;top:244.93px;font-size:6.5px;line-height:7.80px;color:#bdbdbd;">Noise &amp; Grain</div>
<svg style="position:absolute;left:892.5px;top:255.12px;" width="4" height="5" viewBox="0 0 4 5"><path d="M0.8 0.5L2.8 2.5L0.8 4.5" stroke="#888" stroke-width="0.7" fill="none"/></svg>
<div class="t" style="left:898.3px;top:253.85px;font-size:6.5px;line-height:7.80px;color:#bdbdbd;">Obsolete</div>
<svg style="position:absolute;left:892.5px;top:264.03999999999996px;" width="4" height="5" viewBox="0 0 4 5"><path d="M0.8 0.5L2.8 2.5L0.8 4.5" stroke="#888" stroke-width="0.7" fill="none"/></svg>
<div class="t" style="left:898.3px;top:262.77px;font-size:6.5px;line-height:7.80px;color:#bdbdbd;">Perspective</div>
<svg style="position:absolute;left:892.5px;top:272.96000000000004px;" width="4" height="5" viewBox="0 0 4 5"><path d="M0.8 0.5L2.8 2.5L0.8 4.5" stroke="#888" stroke-width="0.7" fill="none"/></svg>
<div class="t" style="left:898.3px;top:271.69px;font-size:6.5px;line-height:7.80px;color:#bdbdbd;">Red Giant</div>
<svg style="position:absolute;left:892.5px;top:281.88px;" width="4" height="5" viewBox="0 0 4 5"><path d="M0.8 0.5L2.8 2.5L0.8 4.5" stroke="#888" stroke-width="0.7" fill="none"/></svg>
<div class="t" style="left:898.3px;top:280.61px;font-size:6.5px;line-height:7.80px;color:#bdbdbd;">RG Trapcode</div>
<svg style="position:absolute;left:892.5px;top:290.8px;" width="4" height="5" viewBox="0 0 4 5"><path d="M0.8 0.5L2.8 2.5L0.8 4.5" stroke="#888" stroke-width="0.7" fill="none"/></svg>
<div class="t" style="left:898.3px;top:289.53px;font-size:6.5px;line-height:7.80px;color:#bdbdbd;">Simulation</div>
<svg style="position:absolute;left:892.5px;top:299.72px;" width="4" height="5" viewBox="0 0 4 5"><path d="M0.8 0.5L2.8 2.5L0.8 4.5" stroke="#888" stroke-width="0.7" fill="none"/></svg>
<div class="t" style="left:898.3px;top:298.45px;font-size:6.5px;line-height:7.80px;color:#bdbdbd;">Stylize</div>
<svg style="position:absolute;left:892.5px;top:308.64px;" width="4" height="5" viewBox="0 0 4 5"><path d="M0.8 0.5L2.8 2.5L0.8 4.5" stroke="#888" stroke-width="0.7" fill="none"/></svg>
<div class="t" style="left:898.3px;top:307.37px;font-size:6.5px;line-height:7.80px;color:#bdbdbd;">Text</div>
<svg style="position:absolute;left:892.5px;top:317.56px;" width="4" height="5" viewBox="0 0 4 5"><path d="M0.8 0.5L2.8 2.5L0.8 4.5" stroke="#888" stroke-width="0.7" fill="none"/></svg>
<div class="t" style="left:898.3px;top:316.29px;font-size:6.5px;line-height:7.80px;color:#bdbdbd;">Time</div>
<svg style="position:absolute;left:892.5px;top:326.48px;" width="4" height="5" viewBox="0 0 4 5"><path d="M0.8 0.5L2.8 2.5L0.8 4.5" stroke="#888" stroke-width="0.7" fill="none"/></svg>
<div class="t" style="left:898.3px;top:325.21px;font-size:6.5px;line-height:7.80px;color:#bdbdbd;">Transition</div>
<svg style="position:absolute;left:892.5px;top:335.4px;" width="4" height="5" viewBox="0 0 4 5"><path d="M0.8 0.5L2.8 2.5L0.8 4.5" stroke="#888" stroke-width="0.7" fill="none"/></svg>
<div class="t" style="left:898.3px;top:334.13px;font-size:6.5px;line-height:7.80px;color:#bdbdbd;">Utility</div>
<svg style="position:absolute;left:892.5px;top:344.32px;" width="4" height="5" viewBox="0 0 4 5"><path d="M0.8 0.5L2.8 2.5L0.8 4.5" stroke="#888" stroke-width="0.7" fill="none"/></svg>
<div class="t" style="left:898.3px;top:343.05px;font-size:6.5px;line-height:7.80px;color:#bdbdbd;">Vimager</div>
<div style="left:889px;top:349.3px;width:110px;height:0.8px;background:#1a1a1a;"></div>
<svg style="position:absolute;left:987px;top:351px;" width="7" height="7" viewBox="0 0 7 7"><rect x="0.5" y="0.5" width="6" height="6" fill="#d8d8d8"/><path d="M0.5 3.5H3.5V6.5" stroke="#888" stroke-width="0.7" fill="none"/></svg>
<div style="left:0px;top:361.5px;width:1000px;height:164.5px;background:#232323;"></div>
<div style="left:0px;top:358.5px;width:1000px;height:1.3px;background:#10151c;"></div>
<div style="left:0px;top:359.8px;width:1000px;height:2.4px;background:#2e4560;"></div>
<div style="left:0px;top:361.5px;width:1.6px;height:164.5px;background:#2e4560;"></div>
<div class="t" style="left:6px;top:364.52px;font-size:6px;line-height:7.20px;color:#777;">×</div>
<div style="left:14px;top:365.3px;width:5.3px;height:5.3px;background:#d8c4a4;"></div>
<div class="t" style="left:25px;top:364.72px;font-size:6px;line-height:7.20px;color:#a8a8a8;">Comp 1</div>
<svg style="position:absolute;left:51px;top:365.8px;" width="5" height="5" viewBox="0 0 5 5"><path d="M0 0.6H5M0 2.4H5M0 4.2H5" stroke="#999" stroke-width="0.8"/></svg>
<div class="t" style="left:8.3px;top:376.44px;font-size:8.9px;line-height:10.68px;color:#4390e6;">0:00:01:07</div>
<div class="t" style="left:7.5px;top:385.76px;font-size:4.9px;line-height:5.88px;color:#2d5c96;">00031 (30.00 fps)</div>
<div style="left:58px;top:378.3px;width:282px;height:11.5px;background:#1b1b1b;"></div>
<svg style="position:absolute;left:62px;top:380.5px;" width="9" height="7" viewBox="0 0 9 7"><circle cx="3.8" cy="2.3" r="1.8" fill="none" stroke="#d4d4d4" stroke-width="1"/><path d="M0.6 5.3H6.2M2.6 3.8L1.2 5.3" stroke="#d4d4d4" stroke-width="1"/><path d="M5.8 4.8H8.4L7.1 6.3Z" fill="#d4d4d4"/></svg>
<svg style="position:absolute;left:351px;top:380px;" width="11" height="9" viewBox="0 0 11 9"><circle cx="2.8" cy="2.6" r="2" fill="#cfcfcf"/><ellipse cx="6.2" cy="6" rx="3.6" ry="2.4" fill="none" stroke="#cfcfcf" stroke-width="1"/><path d="M6.2 3.8V8.2M4 6H8.4" stroke="#cfcfcf" stroke-width="0.6"/></svg>
<svg style="position:absolute;left:369.5px;top:380.5px;" width="9.5" height="8" viewBox="0 0 9.5 8"><path d="M0.5 4.2L4.75 1.5L9 4.2V7.5H0.5Z" fill="#cfcfcf"/><path d="M0.5 4.8H9" stroke="#232323" stroke-width="0.7"/><rect x="3.8" y="5.3" width="1.9" height="2.2" fill="#232323"/></svg>
<svg style="position:absolute;left:384px;top:380.5px;" width="8.5" height="8" viewBox="0 0 8.5 8"><rect x="2.8" y="0.4" width="5.3" height="5.6" fill="#d0d0d0"/><rect x="0.4" y="2.2" width="5.6" height="5.6" fill="#a8a8a8" stroke="#232323" stroke-width="0.7"/></svg>
<svg style="position:absolute;left:397px;top:380px;" width="9.5" height="9" viewBox="0 0 9.5 9"><ellipse cx="4.75" cy="4.5" rx="4.4" ry="2.6" transform="rotate(-40 4.75 4.5)" fill="#a8a8a8"/><path d="M2.5 6.5L6.8 2.3M3.8 7.3L7.8 3.4" stroke="#232323" stroke-width="0.6"/></svg>
<svg style="position:absolute;left:414.5px;top:380.5px;" width="9.5" height="8" viewBox="0 0 9.5 8"><rect x="0.6" y="0.6" width="8.3" height="6.8" fill="none" stroke="#c8c8c8" stroke-width="1"/><path d="M2.2 2.5Q5 2.5 7.2 5.8" stroke="#c8c8c8" stroke-width="0.9" fill="none"/></svg>
<div style="left:1.6px;top:394.5px;width:429px;height:8.3px;background:#2a2a2a;"></div>
<div style="left:340px;top:394.5px;width:90.5px;height:8.3px;background:#353535;"></div>
<div style="left:10.5px;top:394.5px;width:0.7px;height:8.3px;background:#222;"></div>
<div style="left:19px;top:394.5px;width:0.7px;height:8.3px;background:#222;"></div>
<div style="left:26px;top:394.5px;width:0.7px;height:8.3px;background:#222;"></div>
<div style="left:35px;top:394.5px;width:0.7px;height:8.3px;background:#222;"></div>
<div style="left:52px;top:394.5px;width:0.7px;height:8.3px;background:#222;"></div>
<div style="left:63px;top:394.5px;width:0.7px;height:8.3px;background:#222;"></div>
<div style="left:170.5px;top:394.5px;width:0.7px;height:8.3px;background:#222;"></div>
<div style="left:238.5px;top:394.5px;width:0.7px;height:8.3px;background:#222;"></div>
<svg style="position:absolute;left:3.5px;top:396px;" width="7" height="5" viewBox="0 0 7 5"><ellipse cx="3.5" cy="2.5" rx="3.2" ry="2" fill="none" stroke="#bbb" stroke-width="0.8"/><circle cx="3.5" cy="2.5" r="1" fill="#bbb"/></svg>
<svg style="position:absolute;left:12px;top:395.5px;" width="6" height="6" viewBox="0 0 6 6"><path d="M0.5 2H2L4 0.5V5.5L2 4H0.5Z" fill="#bbb"/><path d="M4.8 1.5Q5.8 3 4.8 4.5" stroke="#bbb" stroke-width="0.6" fill="none"/></svg>
<svg style="position:absolute;left:21px;top:396.5px;" width="4" height="4" viewBox="0 0 4 4"><circle cx="2" cy="2" r="1.6" fill="#c4c4c4"/></svg>
<svg style="position:absolute;left:28px;top:395.5px;" width="5" height="6" viewBox="0 0 5 6"><rect x="0.3" y="2.5" width="4.4" height="3.2" fill="#c4c4c4"/><path d="M1.2 2.5V1.4A1.3 1.3 0 0 1 3.8 1.4V2.5" stroke="#c4c4c4" stroke-width="0.7" fill="none"/></svg>
<svg style="position:absolute;left:43.5px;top:395px;" width="7" height="7" viewBox="0 0 7 7"><path d="M0.5 0.5H3L6.5 4L4 6.5L0.5 3Z" fill="#c8c8c8"/><circle cx="2" cy="2" r="0.6" fill="#2a2a2a"/></svg>
<div class="t" style="left:56.5px;top:396.09px;font-size:4.5px;line-height:5.40px;color:#777;">#</div>
<div class="t" style="left:73px;top:396.03px;font-size:4.6px;line-height:5.52px;color:#808080;">Source Name</div>
<svg style="position:absolute;left:172.5px;top:395.3px;" width="6" height="6.3" viewBox="0 0 6 6.3"><circle cx="3" cy="1.5" r="1.2" fill="#b4b4b4"/><path d="M0.5 5.8L3 2.4L5.5 5.8Z" fill="#b4b4b4"/><path d="M3 2.4V5.8" stroke="#2a2a2a" stroke-width="0.5"/></svg>
<svg style="position:absolute;left:180.5px;top:395.3px;" width="6" height="6.3" viewBox="0 0 6 6.3"><circle cx="3" cy="3" r="1.4" fill="#b4b4b4"/><path d="M3 0.2V1M3 5V5.8M0.2 3H1M5 3H5.8" stroke="#b4b4b4" stroke-width="0.7"/></svg>
<svg style="position:absolute;left:188px;top:395.3px;" width="6" height="6.3" viewBox="0 0 6 6.3"><path d="M0.8 0.5L5.3 5.5" stroke="#b4b4b4" stroke-width="0.9"/></svg>
<svg style="position:absolute;left:195.5px;top:395.3px;" width="6" height="6.3" viewBox="0 0 6 6.3"><path d="M1.3 5.8V1.8Q1.3 0.5 2.6 0.5M0.5 2.5H2.6M3 2.5L5.5 5.8M5.5 2.5L3 5.8" stroke="#b4b4b4" stroke-width="0.8" fill="none"/></svg>
<svg style="position:absolute;left:203px;top:395.3px;" width="6" height="6.3" viewBox="0 0 6 6.3"><rect x="0.3" y="0.5" width="5.4" height="5" fill="#b4b4b4"/><path d="M0.3 2.4H5.7M0.3 3.6H5.7" stroke="#2a2a2a" stroke-width="0.5"/></svg>
<svg style="position:absolute;left:211px;top:395.3px;" width="6" height="6.3" viewBox="0 0 6 6.3"><circle cx="2.2" cy="3.5" r="2" fill="#b4b4b4"/><circle cx="3.8" cy="2.5" r="2" fill="none" stroke="#b4b4b4" stroke-width="0.7"/></svg>
<svg style="position:absolute;left:218.5px;top:395.3px;" width="6" height="6.3" viewBox="0 0 6 6.3"><circle cx="3" cy="3" r="2.5" fill="#b4b4b4"/><path d="M3 0.5A2.5 2.5 0 0 1 3 5.5Z" fill="#2a2a2a"/></svg>
<svg style="position:absolute;left:226px;top:395.3px;" width="6" height="6.3" viewBox="0 0 6 6.3"><path d="M3 0.4L5.6 1.8V4.4L3 5.8L0.4 4.4V1.8Z" fill="none" stroke="#b4b4b4" stroke-width="0.7"/><path d="M0.4 1.8L3 3.2L5.6 1.8M3 3.2V5.8" stroke="#b4b4b4" stroke-width="0.6" fill="none"/></svg>
<div class="t" style="left:364.5px;top:396.22px;font-size:4.8px;line-height:5.76px;color:#8c8c8c;">Parent &amp; Link</div>
<div style="left:1.6px;top:402.8px;width:429px;height:9.5px;background:#2e2e2e;"></div>
<svg style="position:absolute;left:3.5px;top:405px;" width="7" height="5" viewBox="0 0 7 5"><ellipse cx="3.5" cy="2.5" rx="3.2" ry="2" fill="none" stroke="#bbb" stroke-width="0.7"/><circle cx="3.5" cy="2.5" r="1" fill="#bbb"/></svg>
<div style="left:40.5px;top:407px;width:2.2px;height:0.7px;background:#999;"></div>
<div style="left:45.5px;top:404.6px;width:6.3px;height:7px;background:#7c82f0;"></div>
<div class="t" style="left:57.3px;top:403.82px;font-size:7.2px;line-height:8.64px;color:#c4c4c4;">1</div>
<svg style="position:absolute;left:72.5px;top:404.5px;" width="6" height="6" viewBox="0 0 6 6"><path d="M3 0.3L3.8 2.2H5.8L4.2 3.5L4.8 5.6L3 4.3L1.2 5.6L1.8 3.5L0.2 2.2H2.2Z" fill="#cfcfcf"/></svg>
<div style="left:80px;top:403.3px;width:90.5px;height:9px;background:#383838;border:0.9px solid #bdbdbd;box-sizing:border-box"></div>
<div class="t" style="left:83px;top:404.00px;font-size:6.9px;line-height:8.28px;color:#cfcfcf;text-decoration:underline">Shape Layer 1</div>
<svg style="position:absolute;left:172.5px;top:404.8px;" width="6" height="6.3" viewBox="0 0 6 6.3"><circle cx="3" cy="1.5" r="1.2" fill="#b4b4b4"/><path d="M0.5 5.8L3 2.4L5.5 5.8Z" fill="#b4b4b4"/><path d="M3 2.4V5.8" stroke="#2a2a2a" stroke-width="0.5"/></svg>
<svg style="position:absolute;left:180.5px;top:404.8px;" width="6" height="6.3" viewBox="0 0 6 6.3"><circle cx="3" cy="3" r="1.4" fill="#b4b4b4"/><path d="M3 0.2V1M3 5V5.8M0.2 3H1M5 3H5.8" stroke="#b4b4b4" stroke-width="0.7"/></svg>
<svg style="position:absolute;left:188px;top:404.8px;" width="6" height="6.3" viewBox="0 0 6 6.3"><path d="M0.8 5.5L5.3 0.5" stroke="#b4b4b4" stroke-width="0.9"/></svg>
<div style="left:203px;top:403.5px;width:26px;height:8px;background:#333;"></div>
<div style="left:363px;top:403.5px;width:12px;height:8.5px;background:#2e2e2e;"></div>
<svg style="position:absolute;left:364.5px;top:404px;" width="8" height="8" viewBox="0 0 8 8"><circle cx="4" cy="4" r="3.3" fill="#6a6a6a"/><path d="M2.5 4A1.5 1.5 0 1 1 4 5.5" stroke="#999" stroke-width="0.6" fill="none"/></svg>
<div style="left:375px;top:403.5px;width:46px;height:8.5px;background:#1e1e1e;"></div>
<div class="t" style="left:378px;top:404.65px;font-size:5.6px;line-height:6.72px;color:#a8a8a8;">None</div>
<svg style="position:absolute;left:414.5px;top:406.5px;" width="4" height="3" viewBox="0 0 4 3"><path d="M0.3 0.5L2 2.3L3.7 0.5" stroke="#888" stroke-width="0.7" fill="none"/></svg>
<div style="left:421px;top:403.5px;width:9.5px;height:8.5px;background:#444;"></div>
<div style="left:340px;top:403.5px;width:23px;height:8.5px;background:#464646;"></div>
<svg style="position:absolute;left:48.5px;top:415px;" width="5" height="4" viewBox="0 0 5 4"><path d="M0.5 0.8L2.5 2.8L4.5 0.8" stroke="#888" stroke-width="0.7" fill="none"/></svg>
<div class="t" style="left:57px;top:413.95px;font-size:6.3px;line-height:7.56px;color:#b4b4b4;">Contents</div>
<div class="t" style="left:218px;top:414.08px;font-size:5.9px;line-height:7.08px;color:#bcbcbc;">Add</div>
<svg style="position:absolute;left:232.5px;top:414px;" width="7" height="7" viewBox="0 0 7 7"><circle cx="3.5" cy="3.5" r="3" fill="#d8d8d8"/><path d="M2.6 1.9L5 3.5L2.6 5.1Z" fill="#262626"/></svg>
<svg style="position:absolute;left:3px;top:423px;" width="8" height="6" viewBox="0 0 8 6"><path d="M0.3 3Q4 -0.6 7.7 3Q4 6.6 0.3 3Z" fill="#dcdcdc"/><circle cx="4" cy="3" r="1.4" fill="#2a2a2a"/></svg>
<svg style="position:absolute;left:56.5px;top:423.5px;" width="4" height="5" viewBox="0 0 4 5"><path d="M0.8 0.5L2.8 2.5L0.8 4.5" stroke="#888" stroke-width="0.7" fill="none"/></svg>
<div style="left:64px;top:421.8px;width:106px;height:8.8px;background:#4a4a4a;"></div>
<div class="t" style="left:66px;top:422.85px;font-size:6.3px;line-height:7.56px;color:#9a9a9a;">Shape 1</div>
<div style="left:175px;top:421.8px;width:64px;height:8.5px;background:#1c1c1c;"></div>
<div class="t" style="left:176.5px;top:422.89px;font-size:5.7px;line-height:6.84px;color:#c4c4c4;">Normal</div>
<svg style="position:absolute;left:232.5px;top:425px;" width="4" height="3" viewBox="0 0 4 3"><path d="M0.3 0.5L2 2.3L3.7 0.5" stroke="#888" stroke-width="0.7" fill="none"/></svg>
<svg style="position:absolute;left:48.5px;top:433px;" width="4" height="5" viewBox="0 0 4 5"><path d="M0.8 0.5L2.8 2.5L0.8 4.5" stroke="#888" stroke-width="0.7" fill="none"/></svg>
<div class="t" style="left:57px;top:432.15px;font-size:6.3px;line-height:7.56px;color:#b0b0b0;">Transform</div>
<div class="t" style="left:173px;top:432.25px;font-size:5.6px;line-height:6.72px;color:#3f7fd0;">Reset</div>
<div style="left:430.5px;top:361.5px;width:3px;height:164.5px;background:#161616;"></div>
<div style="left:433.5px;top:361.5px;width:560.5px;height:164.5px;background:#2e2e2e;"></div>
<div style="left:433.5px;top:361.5px;width:560.5px;height:16.5px;background:#232323;"></div>
<div style="left:433.5px;top:378.3px;width:556.5px;height:3.6px;background:#6c6c6c;"></div>
<div style="left:433.5px;top:382px;width:556.5px;height:12.5px;background:#262626;"></div>
<div style="left:433.5px;top:394px;width:556.5px;height:7.5px;background:#6a6a6a;"></div>
<div style="left:435.7px;top:401.4px;width:554.3px;height:2.5px;background:#28a33a;"></div>
<div style="left:435.7px;top:403.9px;width:554.3px;height:8.2px;background:#606ed8;"></div>
<div style="left:435.7px;top:403.9px;width:554.3px;height:1.5px;background:#7380e0;"></div>
<div style="left:433.5px;top:412.6px;width:560.5px;height:0.9px;background:#252525;"></div>
<div style="left:433.5px;top:420.6px;width:560.5px;height:0.9px;background:#252525;"></div>
<div style="left:433.5px;top:428.6px;width:560.5px;height:0.9px;background:#252525;"></div>
<div style="left:433.5px;top:436.8px;width:560.5px;height:0.9px;background:#252525;"></div>
<div style="left:433.5px;top:401.4px;width:2.3px;height:124.6px;background:#262626;"></div>
<div class="t" style="left:433.5px;top:383.71px;font-size:5.5px;line-height:6.60px;color:#a8a8a8;">:00s</div>
<div class="t" style="left:467.7px;top:383.71px;font-size:5.5px;line-height:6.60px;color:#a8a8a8;">01s</div>
<div style="left:472.2px;top:391.5px;width:0.6px;height:2px;background:#777;"></div>
<div class="t" style="left:504.67px;top:383.71px;font-size:5.5px;line-height:6.60px;color:#a8a8a8;">02s</div>
<div style="left:509.17px;top:391.5px;width:0.6px;height:2px;background:#777;"></div>
<div class="t" style="left:541.6400000000001px;top:383.71px;font-size:5.5px;line-height:6.60px;color:#a8a8a8;">03s</div>
<div style="left:546.1400000000001px;top:391.5px;width:0.6px;height:2px;background:#777;"></div>
<div class="t" style="left:578.61px;top:383.71px;font-size:5.5px;line-height:6.60px;color:#a8a8a8;">04s</div>
<div style="left:583.11px;top:391.5px;width:0.6px;height:2px;background:#777;"></div>
<div class="t" style="left:615.58px;top:383.71px;font-size:5.5px;line-height:6.60px;color:#a8a8a8;">05s</div>
<div style="left:620.08px;top:391.5px;width:0.6px;height:2px;background:#777;"></div>
<div class="t" style="left:652.5500000000001px;top:383.71px;font-size:5.5px;line-height:6.60px;color:#a8a8a8;">06s</div>
<div style="left:657.0500000000001px;top:391.5px;width:0.6px;height:2px;background:#777;"></div>
<div class="t" style="left:689.52px;top:383.71px;font-size:5.5px;line-height:6.60px;color:#a8a8a8;">07s</div>
<div style="left:694.02px;top:391.5px;width:0.6px;height:2px;background:#777;"></div>
<div class="t" style="left:726.49px;top:383.71px;font-size:5.5px;line-height:6.60px;color:#a8a8a8;">08s</div>
<div style="left:730.99px;top:391.5px;width:0.6px;height:2px;background:#777;"></div>
<div class="t" style="left:763.46px;top:383.71px;font-size:5.5px;line-height:6.60px;color:#a8a8a8;">09s</div>
<div style="left:767.96px;top:391.5px;width:0.6px;height:2px;background:#777;"></div>
<div class="t" style="left:800.4300000000001px;top:383.71px;font-size:5.5px;line-height:6.60px;color:#a8a8a8;">10s</div>
<div style="left:804.9300000000001px;top:391.5px;width:0.6px;height:2px;background:#777;"></div>
<div class="t" style="left:837.4000000000001px;top:383.71px;font-size:5.5px;line-height:6.60px;color:#a8a8a8;">11s</div>
<div style="left:841.9000000000001px;top:391.5px;width:0.6px;height:2px;background:#777;"></div>
<div class="t" style="left:874.37px;top:383.71px;font-size:5.5px;line-height:6.60px;color:#a8a8a8;">12s</div>
<div style="left:878.87px;top:391.5px;width:0.6px;height:2px;background:#777;"></div>
<div class="t" style="left:911.34px;top:383.71px;font-size:5.5px;line-height:6.60px;color:#a8a8a8;">13s</div>
<div style="left:915.84px;top:391.5px;width:0.6px;height:2px;background:#777;"></div>
<div class="t" style="left:948.3100000000001px;top:383.71px;font-size:5.5px;line-height:6.60px;color:#a8a8a8;">14s</div>
<div style="left:952.8100000000001px;top:391.5px;width:0.6px;height:2px;background:#777;"></div>
<div class="t" style="left:985.28px;top:383.71px;font-size:5.5px;line-height:6.60px;color:#a8a8a8;">15s</div>
<div style="left:989.78px;top:391.5px;width:0.6px;height:2px;background:#777;"></div>
<svg style="position:absolute;left:432.5px;top:376px;" width="4" height="7" viewBox="0 0 4 7"><path d="M0.5 0.5H2.5Q3.5 3.5 2.5 6.5H0.5Z" fill="#3a8ae8"/></svg>
<svg style="position:absolute;left:990px;top:376px;" width="5" height="7" viewBox="0 0 5 7"><path d="M4 0.5H2Q1 3.5 2 6.5H4Z" fill="#3a8ae8"/></svg>
<svg style="position:absolute;left:432.5px;top:394px;" width="4" height="8" viewBox="0 0 4 8"><path d="M0.5 0.5H2.5Q3.5 4 2.5 7.5H0.5Z" fill="#3a8ae8"/></svg>
<svg style="position:absolute;left:990px;top:394px;" width="5" height="8" viewBox="0 0 5 8"><path d="M4 0.5H2Q1 4 2 7.5H4Z" fill="#3a8ae8"/></svg>
<div style="left:482.8px;top:386px;width:1.1px;height:140px;background:#3a7fd0;"></div>
<svg style="position:absolute;left:479.8px;top:384.5px;" width="7" height="8" viewBox="0 0 7 8"><path d="M3.5 7.6L0.6 4.6A3.1 3.1 0 1 1 6.4 4.6Z" fill="#3d8ff0"/></svg>
<svg style="position:absolute;left:481.5px;top:414px;" width="4" height="6" viewBox="0 0 4 6"><path d="M0.3 0.5H3.7M0.3 5.5H3.7M2 0.5V5.5" stroke="#d8d8d8" stroke-width="1"/></svg>
<svg style="position:absolute;left:481.5px;top:422.6px;" width="4" height="6" viewBox="0 0 4 6"><path d="M0.3 0.5H3.7M0.3 5.5H3.7M2 0.5V5.5" stroke="#d8d8d8" stroke-width="1"/></svg>
<svg style="position:absolute;left:481.5px;top:431px;" width="4" height="6" viewBox="0 0 4 6"><path d="M0.3 0.5H3.7M0.3 5.5H3.7M2 0.5V5.5" stroke="#d8d8d8" stroke-width="1"/></svg>
<div class="t" style="left:846px;top:418.68px;font-size:4px;line-height:4.80px;color:#888;">—</div>
<div style="left:994px;top:361.5px;width:6px;height:164.5px;background:#262626;"></div>
<svg style="position:absolute;left:995.3px;top:395px;" width="5" height="7" viewBox="0 0 5 7"><rect x="0.3" y="0.3" width="6" height="6.5" rx="1" fill="#d8d8d8"/></svg>
<svg style="position:absolute;left:994.5px;top:405px;" width="6" height="8" viewBox="0 0 6 8"><circle cx="4" cy="4" r="3.3" fill="none" stroke="#ccc" stroke-width="1"/><circle cx="4" cy="4" r="1.2" fill="#ccc"/></svg>
<div style="left:898px;top:524px;width:102px;height:2px;background:#f4f4f4;"></div>
<svg style="position:absolute;left:895px;top:522px;" width="16" height="4" viewBox="0 0 16 4"><ellipse cx="8" cy="3.5" rx="6" ry="2.5" fill="#e86a3a"/></svg>
<div style="left:239px;top:180.8px;width:102px;height:232.4px;background:#f0f0f0;box-shadow:1px 1px 2px rgba(0,0,0,.35)"></div>
<div class="t" style="left:257.5px;top:183.99px;font-size:7px;line-height:8.40px;color:#161616;-webkit-text-stroke:0.06px #161616">Group (empty)</div>
<div style="left:256px;top:195.37px;width:80px;height:0.8px;background:#d6d6d6;"></div>
<div class="t" style="left:257.5px;top:199.06px;font-size:7px;line-height:8.40px;color:#161616;-webkit-text-stroke:0.06px #161616">Rectangle</div>
<div class="t" style="left:257.5px;top:210.63px;font-size:7px;line-height:8.40px;color:#161616;-webkit-text-stroke:0.06px #161616">Ellipse</div>
<div class="t" style="left:257.5px;top:222.20px;font-size:7px;line-height:8.40px;color:#161616;-webkit-text-stroke:0.06px #161616">Polystar</div>
<div class="t" style="left:257.5px;top:233.77px;font-size:7px;line-height:8.40px;color:#161616;-webkit-text-stroke:0.06px #161616">Path</div>
<div style="left:256px;top:245.14999999999998px;width:80px;height:0.8px;background:#d6d6d6;"></div>
<div class="t" style="left:257.5px;top:248.84px;font-size:7px;line-height:8.40px;color:#161616;-webkit-text-stroke:0.06px #161616">Fill</div>
<div class="t" style="left:257.5px;top:260.41px;font-size:7px;line-height:8.40px;color:#161616;-webkit-text-stroke:0.06px #161616">Stroke</div>
<div class="t" style="left:257.5px;top:271.98px;font-size:7px;line-height:8.40px;color:#161616;-webkit-text-stroke:0.06px #161616">Gradient Fill</div>
<div class="t" style="left:257.5px;top:283.55px;font-size:7px;line-height:8.40px;color:#161616;-webkit-text-stroke:0.06px #161616">Gradient Stroke</div>
<div style="left:256px;top:294.92999999999995px;width:80px;height:0.8px;background:#d6d6d6;"></div>
<div class="t" style="left:257.5px;top:298.62px;font-size:7px;line-height:8.40px;color:#161616;-webkit-text-stroke:0.06px #161616">Merge Paths</div>
<div class="t" style="left:257.5px;top:310.19px;font-size:7px;line-height:8.40px;color:#161616;-webkit-text-stroke:0.06px #161616">Offset Paths</div>
<div class="t" style="left:257.5px;top:321.76px;font-size:7px;line-height:8.40px;color:#161616;-webkit-text-stroke:0.06px #161616">Pucker &amp; Bloat</div>
<div class="t" style="left:257.5px;top:333.33px;font-size:7px;line-height:8.40px;color:#161616;-webkit-text-stroke:0.06px #161616">Repeater</div>
<div class="t" style="left:257.5px;top:344.90px;font-size:7px;line-height:8.40px;color:#161616;-webkit-text-stroke:0.06px #161616">Round Corners</div>
<div class="t" style="left:257.5px;top:356.47px;font-size:7px;line-height:8.40px;color:#161616;-webkit-text-stroke:0.06px #161616">Trim Paths</div>
<div class="t" style="left:257.5px;top:368.04px;font-size:7px;line-height:8.40px;color:#161616;-webkit-text-stroke:0.06px #161616">Twist</div>
<div class="t" style="left:257.5px;top:379.61px;font-size:7px;line-height:8.40px;color:#161616;-webkit-text-stroke:0.06px #161616">Wiggle Paths</div>
<div class="t" style="left:257.5px;top:391.18px;font-size:7px;line-height:8.40px;color:#161616;-webkit-text-stroke:0.06px #161616">Wiggle Transform</div>
<div class="t" style="left:257.5px;top:402.75px;font-size:7px;line-height:8.40px;color:#161616;-webkit-text-stroke:0.06px #161616">Zig Zag</div>
<div style="left:248.7px;top:353.2px;width:69.5px;height:14px;background:transparent;border:2px solid #e6363a;border-radius:1.5px;box-sizing:border-box"></div>
<svg style="position:absolute;left:295px;top:360px;" width="70" height="95" viewBox="0 0 70 95"><path d="M9.3 5.5L16.5 8.5L13.6 10.6L60.5 90L58.5 90.8L10.7 12.4L7.8 13.5Z" fill="#f01c1c"/></svg>
</body></html>
